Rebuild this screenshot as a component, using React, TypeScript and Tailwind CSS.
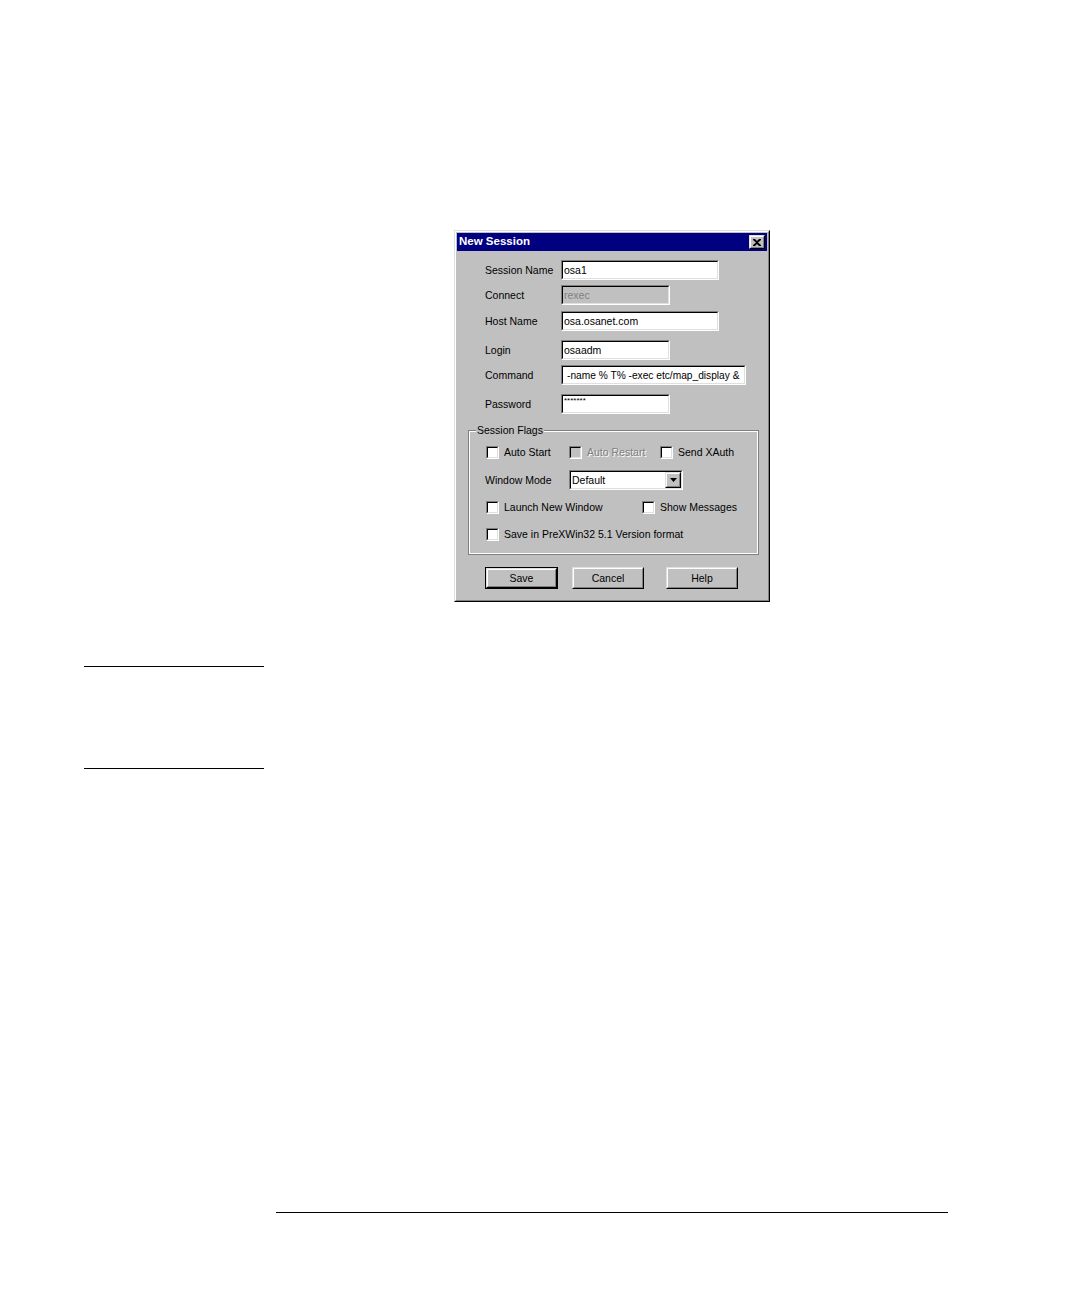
import React from "react";

const font = "font-['Liberation_Sans',Arial,sans-serif]";

// win95-style bevels
const raisedOuter = "border border-t-[#dfdfdf] border-l-[#dfdfdf] border-r-black border-b-black";
const raisedInner = "border border-t-white border-l-white border-r-[#808080] border-b-[#808080]";
const sunkenOuter = "border border-t-[#808080] border-l-[#808080] border-r-white border-b-white";
const sunkenInner = "border border-t-black border-l-black border-r-[#dfdfdf] border-b-[#dfdfdf]";

function TextBox({
  value,
  width,
  disabled,
  small,
  indent,
}: {
  value: string;
  width: string;
  disabled?: boolean;
  small?: boolean;
  indent?: boolean;
}) {
  return (
    <div className={`${sunkenOuter} ${width} h-[20px]`}>
      <div
        className={`${sunkenInner} h-full flex ${small ? "items-start pt-[1px]" : "items-center"} ${
          indent ? "pl-[4px]" : "pl-[1px]"
        } ${disabled ? "bg-[#c0c0c0] text-[#808080]" : "bg-white text-black"}`}
      >
        <span
          className={`${
            small ? "text-[8px] leading-[8px]" : indent ? "text-[10.2px] leading-[13px]" : "text-[10.5px] leading-[13px]"
          } whitespace-nowrap overflow-hidden`}
        >
          {value}
        </span>
      </div>
    </div>
  );
}

function Row({ label, children, className }: { label: string; children: React.ReactNode; className: string }) {
  return (
    <div className={`flex items-center h-[20px] pl-[28px] ${className}`}>
      <span className="w-[76px] text-[10.5px] leading-none">{label}</span>
      {children}
    </div>
  );
}

function Check({ label, disabled, width }: { label: string; disabled?: boolean; width?: string }) {
  return (
    <div className={`flex items-center h-[13px] ${width ?? ""}`}>
      <div className={`${sunkenOuter} w-[13px] h-[13px] shrink-0`}>
        <div className={`${sunkenInner} w-full h-full ${disabled ? "bg-[#c0c0c0]" : "bg-white"}`} />
      </div>
      <span
        className={`ml-[5px] text-[10.5px] leading-none whitespace-nowrap ${
          disabled ? "text-[#808080] [text-shadow:1px_1px_0_#fff]" : ""
        }`}
      >
        {label}
      </span>
    </div>
  );
}

function Button({ label, isDefault }: { label: string; isDefault?: boolean }) {
  const body = (
    <div className={`${raisedOuter} w-full h-full`}>
      <div className={`${raisedInner} w-full h-full flex items-center justify-center`}>
        <span className="text-[10.5px] leading-none">{label}</span>
      </div>
    </div>
  );
  return isDefault ? (
    <div className="w-[73px] h-[22px] border border-black">{body}</div>
  ) : (
    <div className="w-[72px] h-[22px]">{body}</div>
  );
}

function NewSessionDialog() {
  return (
    <div className={`${raisedOuter} w-[316px] h-[372px] bg-[#c0c0c0] ${font} text-black`}>
      <div className={`${raisedInner} h-full p-[1px]`}>
        {/* title bar */}
        <div className="h-[18px] bg-[#000080] flex items-center justify-between pl-[2px] pr-[2px]">
          <span className="text-white font-bold text-[11.5px] leading-none">New Session</span>
          <div className={`${raisedOuter} w-[16px] h-[14px] bg-[#c0c0c0]`}>
            <div className={`${raisedInner} w-full h-full flex items-center justify-center`}>
              <svg width="8" height="7" viewBox="0 0 8 7">
                <path d="M0 0h2l2 2 2-2h2v1L5 3.5 8 6v1H6L4 5 2 7H0V6l3-2.5L0 1z" fill="#000" />
              </svg>
            </div>
          </div>
        </div>

        <Row label="Session Name" className="mt-[9px]">
          <TextBox value="osa1" width="w-[158px]" />
        </Row>
        <Row label="Connect" className="mt-[5px]">
          <TextBox value="rexec" width="w-[109px]" disabled />
        </Row>
        <Row label="Host Name" className="mt-[6px]">
          <TextBox value="osa.osanet.com" width="w-[158px]" />
        </Row>
        <Row label="Login" className="mt-[9px]">
          <TextBox value="osaadm" width="w-[109px]" />
        </Row>
        <Row label="Command" className="mt-[5px]">
          <TextBox value="-name % T% -exec etc/map_display &" width="w-[185px]" indent />
        </Row>
        <Row label="Password" className="mt-[9px]">
          <TextBox value="*******" width="w-[109px]" small />
        </Row>

        {/* Session Flags group */}
        <div className="relative ml-[11px] mt-[16px] w-[291px] h-[125px] border border-[#808080]">
          <span className="absolute -top-[6px] left-[7px] px-[1px] bg-[#c0c0c0] text-[10.5px] leading-none">
            Session Flags
          </span>
          <div className="h-full border border-white">
            <div className="flex items-center pl-[16px] mt-[14px]">
              <Check label="Auto Start" width="w-[83px]" />
              <Check label="Auto Restart" width="w-[91px]" disabled />
              <Check label="Send XAuth" />
            </div>

            <div className="flex items-center pl-[15px] mt-[11px] h-[20px]">
              <span className="w-[84px] text-[10.5px] leading-none">Window Mode</span>
              <div className={`${sunkenOuter} w-[114px] h-[20px]`}>
                <div className={`${sunkenInner} h-full bg-white flex items-center justify-between`}>
                  <span className="pl-[1px] text-[10.5px] leading-none">Default</span>
                  <div className={`${raisedOuter} w-[16px] h-full bg-[#c0c0c0]`}>
                    <div className={`${raisedInner} w-full h-full flex items-center justify-center`}>
                      <svg width="7" height="4" viewBox="0 0 7 4">
                        <path d="M0 0h7L3.5 4z" fill="#000" />
                      </svg>
                    </div>
                  </div>
                </div>
              </div>
            </div>

            <div className="flex items-center pl-[16px] mt-[11px]">
              <Check label="Launch New Window" width="w-[156px]" />
              <Check label="Show Messages" />
            </div>

            <div className="flex items-center pl-[16px] mt-[14px]">
              <Check label="Save in PreXWin32 5.1 Version format" />
            </div>
          </div>
        </div>

        <div className="flex items-start ml-[28px] mt-[12px]">
          <Button label="Save" isDefault />
          <div className="ml-[14px]">
            <Button label="Cancel" />
          </div>
          <div className="ml-[22px]">
            <Button label="Help" />
          </div>
        </div>
      </div>
    </div>
  );
}

export default function App() {
  return (
    <div className="w-[1080px] h-[1296px] bg-white overflow-hidden pt-[230px]">
      <div className="ml-[454px]">
        <NewSessionDialog />
      </div>
      <div className="ml-[84px] mt-[64px] w-[180px] h-px bg-black" />
      <div className="ml-[84px] mt-[101px] w-[180px] h-px bg-black" />
      <div className="ml-[276px] mt-[443px] w-[672px] h-px bg-black" />
    </div>
  );
}
